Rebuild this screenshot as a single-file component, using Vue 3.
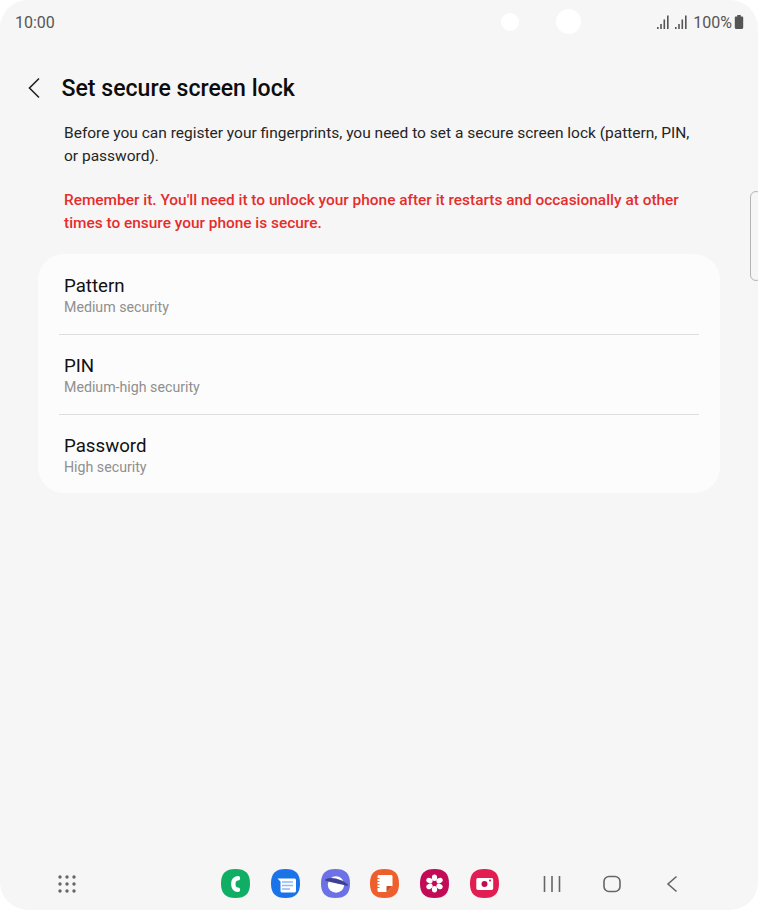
<script setup>
const options = [
  { title: 'Pattern', sub: 'Medium security' },
  { title: 'PIN', sub: 'Medium-high security' },
  { title: 'Password', sub: 'High security' },
]
const squircle = 'M14.5 0C24.5 0 29 4.5 29 14.5S24.5 29 14.5 29 0 24.5 0 14.5 4.5 0 14.5 0z'
const signal = 'M1 12h1.6v2H1zM4.200 9h1.600v5H4.200zM7.500 4.500h1.600V14H7.500zM11 .5h1.600V14H11z'
</script>

<template>
  <div class="screen">
    <span class="cam cam-small"></span>
    <span class="cam cam-large"></span>
    <span class="side-handle"></span>

    <header class="status">
      <span class="time">10:00</span>
      <div class="status-right">
        <svg width="13" height="14" viewBox="0 0 13 14"><path :d="signal" fill="#555"/></svg>
        <svg class="second" width="13" height="14" viewBox="0 0 13 14"><path :d="signal" fill="#555"/></svg>
        <span class="pct">100%</span>
        <svg class="battery" width="10" height="14" viewBox="0 0 10 14"><path d="M3.300 0h3.400v1.400h1.300c.8 0 1.200.5 1.200 1.200v10c0 .8-.5 1.300-1.200 1.300H2c-.8 0-1.200-.5-1.200-1.300v-10c0-.7.4-1.200 1.200-1.200h1.300z" fill="#555"/></svg>
      </div>
    </header>

    <div class="titlebar">
      <svg class="back" width="14" height="22" viewBox="0 0 14 22"><path d="M12 1.500 2.500 11 12 20.500" fill="none" stroke="#222" stroke-width="1.600"/></svg>
      <h1>Set secure screen lock</h1>
    </div>

    <main class="content">
      <p class="intro">Before you can register your fingerprints, you need to set a secure screen lock (pattern, PIN, or password).</p>
      <p class="warn">Remember it. You'll need it to unlock your phone after it restarts and occasionally at other times to ensure your phone is secure.</p>

      <section class="card">
        <div v-for="o in options" :key="o.title" class="row">
          <div class="row-title">{{ o.title }}</div>
          <div class="row-sub">{{ o.sub }}</div>
        </div>
      </section>
    </main>

    <footer class="dock">
      <svg class="apps" width="18" height="18" viewBox="0 0 18 18" fill="#666">
        <circle cx="2" cy="2" r="1.700"/><circle cx="9" cy="2" r="1.700"/><circle cx="16" cy="2" r="1.700"/>
        <circle cx="2" cy="9" r="1.700"/><circle cx="9" cy="9" r="1.700"/><circle cx="16" cy="9" r="1.700"/>
        <circle cx="2" cy="16" r="1.700"/><circle cx="9" cy="16" r="1.700"/><circle cx="16" cy="16" r="1.700"/>
      </svg>

      <div class="dock-apps">
        <svg width="29" height="29" viewBox="0 0 29 29">
          <path :d="squircle" fill="#0fae64"/>
          <path d="M17 9.300C13.800 9.300 12.300 11.800 12.300 15s1.500 5.700 4.700 5.700" fill="none" stroke="#fff" stroke-width="4.400" stroke-linecap="round"/>
        </svg>
        <svg width="29" height="29" viewBox="0 0 29 29">
          <path :d="squircle" fill="#1a73e8"/>
          <path d="M6.500 9.500h17c.8 0 1.500.7 1.500 1.500v11c0 .8-.7 1.500-1.500 1.500H11c-.8 0-1.500-.7-1.500-1.500V12.500z" fill="#fff"/>
          <path d="M11 13h11M11 16.500h11M11 20h8" stroke="#8fb8f5" stroke-width="1.500"/>
        </svg>
        <svg width="29" height="29" viewBox="0 0 29 29">
          <path :d="squircle" fill="#6c72e6"/>
          <circle cx="15" cy="15.500" r="8.200" fill="#fff"/>
          <path d="M5 11C10 8.800 19 10 26 16c-5-1.500-13-2.500-21-5z" fill="#3d4296" stroke="#3d4296" stroke-width="1.800" stroke-linejoin="round"/>
        </svg>
        <svg width="29" height="29" viewBox="0 0 29 29">
          <path :d="squircle" fill="#ee5f2e"/>
          <path d="M9 6h12c.9 0 1.500.6 1.500 1.500V17l-6 6H9c-.9 0-1.500-.6-1.500-1.500v-14C7.500 6.600 8.100 6 9 6z" fill="#fff"/>
          <path d="M16.500 23v-5c0-.6.400-1 1-1h5z" fill="#c9501c"/>
          <path d="M6.500 9.500h3M6.500 12.500h3M6.500 15.500h3M6.500 18.500h3" stroke="#ee5f2e" stroke-width=".9"/>
        </svg>
        <svg width="29" height="29" viewBox="0 0 29 29">
          <path :d="squircle" fill="#c20b57"/>
          <g fill="#fff">
            <ellipse cx="14.500" cy="8.700" rx="2.600" ry="3.300"/>
            <ellipse cx="14.500" cy="8.700" rx="2.600" ry="3.300" transform="rotate(60 14.500 14.500)"/>
            <ellipse cx="14.500" cy="8.700" rx="2.600" ry="3.300" transform="rotate(120 14.500 14.500)"/>
            <ellipse cx="14.500" cy="8.700" rx="2.600" ry="3.300" transform="rotate(180 14.500 14.500)"/>
            <ellipse cx="14.500" cy="8.700" rx="2.600" ry="3.300" transform="rotate(240 14.500 14.500)"/>
            <ellipse cx="14.500" cy="8.700" rx="2.600" ry="3.300" transform="rotate(300 14.500 14.500)"/>
          </g>
          <circle cx="14.500" cy="14.500" r="1.500" fill="#c20b57"/>
        </svg>
        <svg width="29" height="29" viewBox="0 0 29 29">
          <path :d="squircle" fill="#e11d52"/>
          <path d="M8 9h13.500c1 0 1.700.7 1.700 1.700v8.600c0 1-.7 1.700-1.700 1.700H8c-1 0-1.700-.7-1.700-1.700v-8.600C6.300 9.700 7 9 8 9z" fill="#fff"/>
          <circle cx="14.500" cy="15" r="3" fill="#c20b4f"/>
          <circle cx="20" cy="11.500" r="1" fill="#c20b4f"/>
        </svg>
      </div>

      <div class="nav">
        <svg class="nav-recents" width="18" height="18" viewBox="0 0 18 18"><path d="M1.500 1v16M9 1v16M16.500 1v16" stroke="#666" stroke-width="1.600" fill="none"/></svg>
        <svg class="nav-home" width="18" height="18" viewBox="0 0 18 18"><rect x="1" y="1.500" width="16" height="15" rx="5" stroke="#666" stroke-width="1.600" fill="none"/></svg>
        <svg class="nav-back" width="12" height="18" viewBox="0 0 12 18"><path d="M10.500 1.500 2 9l8.500 7.500" stroke="#666" stroke-width="1.600" fill="none"/></svg>
      </div>
    </footer>
  </div>
</template>

<style>
html, body { margin: 0; background: #fff; }
</style>

<style scoped>
.screen {
  position: relative;
  box-sizing: border-box;
  width: 758px;
  height: 910px;
  background: #f6f6f6;
  border-radius: 28px;
  overflow: hidden;
  display: flex;
  flex-direction: column;
  font-family: Roboto, "Liberation Sans", sans-serif;
}
.cam { position: absolute; background: #fff; border-radius: 50%; }
.cam-small { left: 501px; top: 13px; width: 18px; height: 18px; }
.cam-large { left: 556px; top: 9px; width: 25px; height: 25px; }
.side-handle {
  position: absolute;
  left: 750px;
  top: 191px;
  width: 12px;
  height: 90px;
  box-sizing: border-box;
  border: 1px solid #b4b4b4;
  border-radius: 6px;
}
.status {
  height: 44px;
  display: flex;
  justify-content: space-between;
  align-items: center;
  padding: 0 14px 0 15px;
  color: #555;
  font-size: 16px;
}
.status-right { display: flex; align-items: center; }
.second { margin-left: 5px; }
.pct { margin-left: 6px; }
.battery { margin-left: 2px; }
.titlebar {
  display: flex;
  align-items: center;
  height: 28px;
  margin-top: 30px;
  padding-left: 27px;
}
.back { flex: none; }
h1 {
  margin: 0 0 0 20.500px;
  font-size: 23.100px;
  font-weight: 500;
  color: #0c0c0c;
}
.content { flex: 1; padding: 0 38px; }
.intro, .warn {
  margin: 0;
  padding: 0 26px;
  font-size: 15.500px;
  line-height: 23px;
}
.intro { margin-top: 20px; color: #252525; }
.warn { margin-top: 21px; color: #e52d2d; font-weight: 500; font-size: 15.420px; line-height: 22.500px; }
.card {
  margin-top: 20px;
  padding: 1px 21px 0;
  background: #fcfcfc;
  border-radius: 26px;
}
.row {
  height: 80px;
  box-sizing: border-box;
  padding: 19px 0 0 5px;
  border-bottom: 1px solid #dfdfdf;
}
.row:last-child { border-bottom: 0; height: 78px; }
.row-title { font-size: 18.700px; line-height: 24px; color: #111; }
.row-sub { font-size: 14.200px; line-height: 18px; color: #8f8f8f; }
.dock {
  height: 41px;
  display: flex;
  align-items: flex-start;
  padding-left: 58px;
}
.apps { margin-top: 6px; flex: none; }
.dock-apps {
  display: flex;
  gap: 20.800px;
  margin-left: 145px;
  flex: none;
}
.nav {
  display: flex;
  align-items: center;
  margin-left: 44.500px;
  height: 30px;
}
.nav-home { margin-left: 42px; }
.nav-back { margin-left: 45px; }
</style>
